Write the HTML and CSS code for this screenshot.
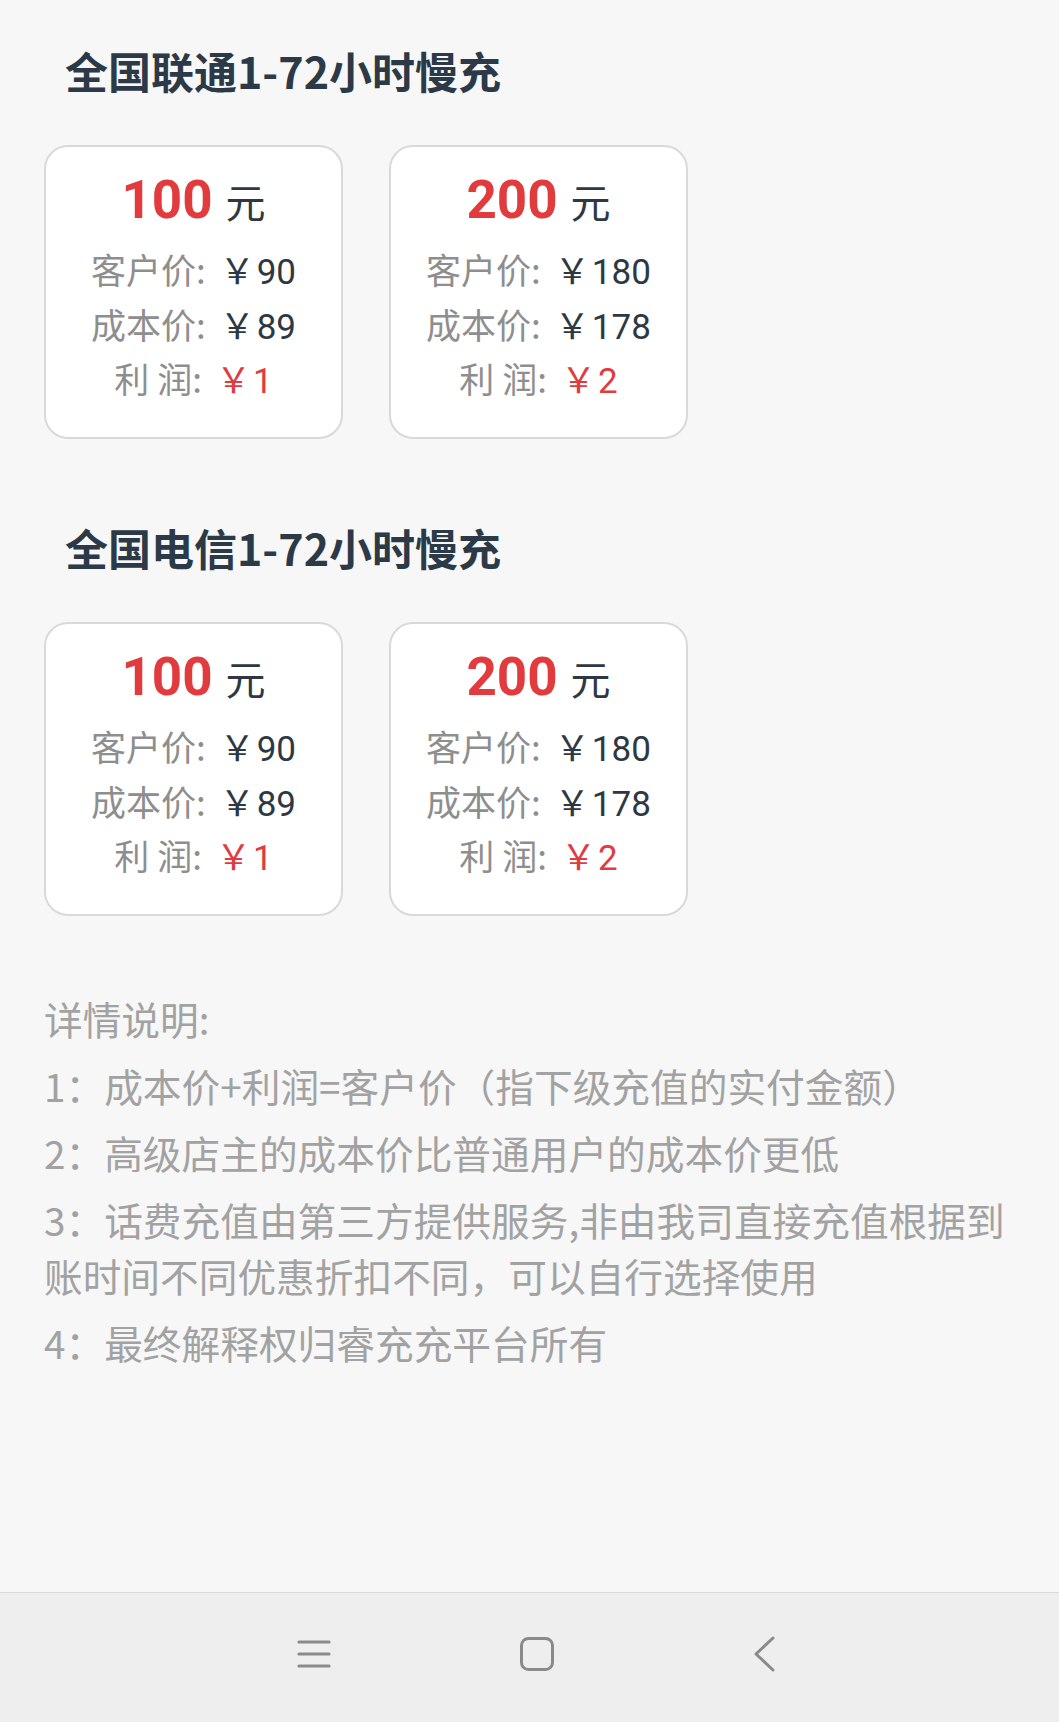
FILE: index.html
```html
<!DOCTYPE html>
<html lang="zh-CN">
<head>
<meta charset="utf-8">
<title>话费慢充</title>
<link rel="stylesheet" href="styles.css">
</head>
<body>
<div class="screen">
  <main class="page">
    <section class="group">
      <h2 class="group-title">全国联通1-72小时慢充</h2>
      <div class="cards">
        <div class="card">
          <div class="amount"><span class="num">100</span><span class="unit">元</span></div>
          <div class="row"><span class="label">客户价:</span><span class="val"><span class="yen">￥</span>90</span></div>
          <div class="row"><span class="label">成本价:</span><span class="val"><span class="yen">￥</span>89</span></div>
          <div class="row"><span class="label">利 润:</span><span class="val red"><span class="yen">￥</span>1</span></div>
        </div>
        <div class="card">
          <div class="amount"><span class="num">200</span><span class="unit">元</span></div>
          <div class="row"><span class="label">客户价:</span><span class="val"><span class="yen">￥</span>180</span></div>
          <div class="row"><span class="label">成本价:</span><span class="val"><span class="yen">￥</span>178</span></div>
          <div class="row"><span class="label">利 润:</span><span class="val red"><span class="yen">￥</span>2</span></div>
        </div>
      </div>
    </section>
    <section class="group">
      <h2 class="group-title">全国电信1-72小时慢充</h2>
      <div class="cards">
        <div class="card">
          <div class="amount"><span class="num">100</span><span class="unit">元</span></div>
          <div class="row"><span class="label">客户价:</span><span class="val"><span class="yen">￥</span>90</span></div>
          <div class="row"><span class="label">成本价:</span><span class="val"><span class="yen">￥</span>89</span></div>
          <div class="row"><span class="label">利 润:</span><span class="val red"><span class="yen">￥</span>1</span></div>
        </div>
        <div class="card">
          <div class="amount"><span class="num">200</span><span class="unit">元</span></div>
          <div class="row"><span class="label">客户价:</span><span class="val"><span class="yen">￥</span>180</span></div>
          <div class="row"><span class="label">成本价:</span><span class="val"><span class="yen">￥</span>178</span></div>
          <div class="row"><span class="label">利 润:</span><span class="val red"><span class="yen">￥</span>2</span></div>
        </div>
      </div>
    </section>
    <section class="notes">
      <p>详情说明:</p>
      <p>1：成本价+利润=客户价（指下级充值的实付金额）</p>
      <p>2：高级店主的成本价比普通用户的成本价更低</p>
      <p>3：话费充值由第三方提供服务,非由我司直接充值根据到账时间不同优惠折扣不同，可以自行选择使用</p>
      <p>4：最终解释权归睿充充平台所有</p>
    </section>
  </main>
  <nav class="navbar">
    <span class="nav-btn nav-menu">
      <svg width="34" height="30" viewBox="0 0 34 30"><path d="M2 3H32M2 15H32M2 27H32" stroke="#8a8a8a" stroke-width="3.2" stroke-linecap="round" fill="none"/></svg>
    </span>
    <span class="nav-btn nav-home">
      <svg width="36" height="36" viewBox="0 0 36 36"><rect x="2.5" y="2.5" width="31" height="31" rx="7" ry="7" stroke="#8a8a8a" stroke-width="3" fill="none"/></svg>
    </span>
    <span class="nav-btn nav-back">
      <svg width="24" height="36" viewBox="0 0 24 36"><path d="M20 2L3 18L20 34" stroke="#8a8a8a" stroke-width="3" stroke-linecap="round" stroke-linejoin="round" fill="none"/></svg>
    </span>
  </nav>
</div>
</body>
</html>
```

FILE: styles.css
```css
* { box-sizing: border-box; }
html, body { margin: 0; padding: 0; }
body {
  background: #f7f7f7;
  font-family: "Noto Sans CJK SC", "Noto Sans", sans-serif;
}
.screen {
  min-height: 1722px;
  display: flex;
  flex-direction: column;
}
.page {
  flex: 1;
  padding: 40px 44px 0 44px;
}
.group + .group { margin-top: 78px; }
.group-title {
  margin: 0 0 45px 0;
  padding-left: 21px;
  font-size: 43px;
  line-height: 60px;
  font-weight: 700;
  color: #2c3946;
}
.cards {
  display: flex;
  gap: 46px;
}
.card {
  width: 299px;
  height: 294px;
  background: #ffffff;
  border: 2px solid #d9d9d9;
  border-radius: 24px;
  padding-top: 21px;
  text-align: center;
}
.amount {
  display: flex;
  justify-content: center;
  align-items: baseline;
  gap: 13px;
  height: 64px;
  line-height: 64px;
  margin-bottom: 10px;
}
.num {
  font-family: Roboto, "Noto Sans CJK SC", sans-serif;
  font-weight: 700;
  font-size: 53px;
  color: #e23b3d;
}
.unit {
  font-size: 40px;
  color: #2e3843;
}
.row {
  display: flex;
  justify-content: center;
  align-items: baseline;
  height: 54.5px;
  line-height: 54.5px;
  font-size: 35px;
  color: #8e8e8e;
  white-space: nowrap;
}
.val {
  font-family: Roboto, "Noto Sans CJK SC", sans-serif;
  color: #2e3843;
  margin-left: 14px;
}
.val .yen {
  font-family: "Noto Sans CJK SC", sans-serif;
  margin-right: 2px;
}
.val.red { color: #e03c3f; }
.notes {
  margin-top: 74px;
  color: #a2a2a2;
  font-size: 38.7px;
  line-height: 56px;
}
.notes p { margin: 0 0 11px 0; }
.navbar {
  height: 130px;
  background: #eeeeee;
  border-top: 1px solid #d9d9d9;
  display: flex;
  justify-content: center;
  align-items: center;
  padding-bottom: 8px;
  padding-left: 20px;
}
.nav-btn {
  width: 60px;
  height: 40px;
  display: flex;
  align-items: center;
  justify-content: center;
}
.nav-home { margin-left: 163px; margin-right: 168px; }
```
